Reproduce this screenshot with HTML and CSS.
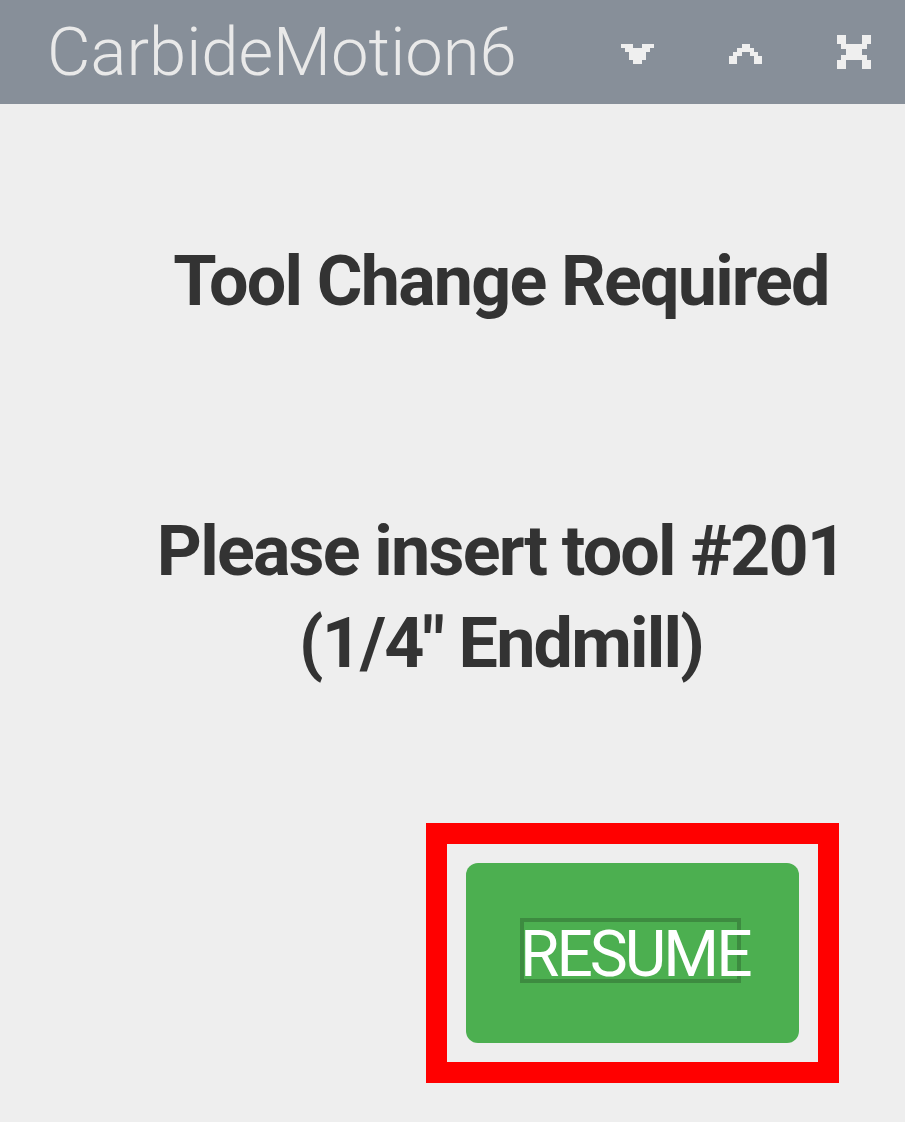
FILE: index.html
```html
<!DOCTYPE html>
<html>
<head>
<meta charset="utf-8">
<link rel="stylesheet" href="styles.css">
</head>
<body>
<div class="window">
  <div class="titlebar">
    <div class="title">CarbideMotion6</div>
    <div class="controls">
      <svg class="icon" width="34" height="34" viewBox="0 0 34 34" shape-rendering="crispEdges">
        <rect x="0" y="9" width="12" height="4"/>
        <rect x="21" y="9" width="12" height="4"/>
        <rect x="4" y="13" width="25" height="4"/>
        <rect x="8" y="17" width="17" height="8"/>
        <rect x="12" y="25" width="9" height="4"/>
      </svg>
      <svg class="icon" width="34" height="34" viewBox="0 0 34 34" shape-rendering="crispEdges">
        <rect x="13" y="9" width="8" height="4"/>
        <rect x="8" y="13" width="17" height="4"/>
        <rect x="4" y="17" width="9" height="4"/>
        <rect x="21" y="17" width="8" height="4"/>
        <rect x="0" y="21" width="8" height="8"/>
        <rect x="25" y="21" width="8" height="8"/>
      </svg>
      <svg class="icon" width="34" height="34" viewBox="0 0 34 34" shape-rendering="crispEdges">
        <rect x="0" y="0" width="9" height="9"/>
        <rect x="25" y="0" width="9" height="9"/>
        <rect x="4" y="9" width="26" height="5"/>
        <rect x="9" y="14" width="16" height="6"/>
        <rect x="4" y="20" width="26" height="5"/>
        <rect x="0" y="25" width="9" height="9"/>
        <rect x="25" y="25" width="9" height="9"/>
      </svg>
    </div>
  </div>
  <div class="content">
    <div class="heading">Tool Change Required</div>
    <div class="message">Please insert tool #201<br>(1/4" Endmill)</div>
  </div>
  <div class="actions">
    <div class="highlight">
      <button class="resume"><span class="label">RESUME</span></button>
    </div>
  </div>
</div>
</body>
</html>
```

FILE: styles.css
```css
html, body {
  margin: 0;
  padding: 0;
  background: #eeeeee;
}
.window {
  width: 905px;
  height: 1122px;
  background: #eeeeee;
  font-family: Roboto, "Liberation Sans", sans-serif;
  overflow: hidden;
}
.titlebar {
  height: 104px;
  background: #878f99;
  display: flex;
  align-items: center;
  padding-left: 47px;
  padding-right: 34px;
  box-sizing: border-box;
}
.title {
  flex: 1;
  color: #e9e9e9;
  font-weight: 300;
  font-size: 67px;
  line-height: 104px;
  white-space: nowrap;
}
.controls {
  display: flex;
  align-items: center;
  gap: 74px;
}
.icon {
  display: block;
  fill: #efefef;
}
.content {
  display: flex;
  flex-direction: column;
  align-items: center;
  padding-left: 97px;
  padding-top: 131px;
  color: #333333;
  font-weight: 700;
  font-size: 70px;
  line-height: 92px;
  letter-spacing: -1.8px;
  text-align: center;
}
.heading {
  white-space: nowrap;
}
.message {
  margin-top: 178px;
  white-space: nowrap;
}
.actions {
  display: flex;
  justify-content: flex-end;
  padding-right: 66px;
  margin-top: 134px;
}
.highlight {
  border: 21px solid #ff0000;
  padding: 19px;
}
.resume {
  width: 333px;
  height: 180px;
  background: #4caf50;
  border: none;
  border-radius: 12px;
  display: flex;
  align-items: center;
  justify-content: center;
  padding: 0;
  margin: 0;
  font-family: Roboto, "Liberation Sans", sans-serif;
}
.label {
  display: block;
  box-sizing: border-box;
  width: 221px;
  height: 65px;
  padding-top: 4px;
  margin-left: -4px;
  margin-top: -5px;
  border: 4px solid #3d8b40;
  color: #ffffff;
  font-size: 64px;
  font-weight: 400;
  line-height: 57px;
  letter-spacing: -3px;
  text-indent: -4px;
  text-align: left;
  white-space: nowrap;
  overflow: visible;
}
```
